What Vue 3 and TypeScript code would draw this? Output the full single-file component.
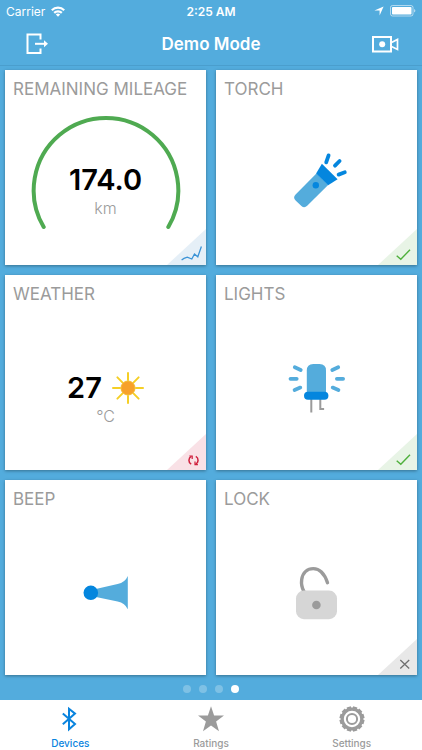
<script setup lang="ts">
import { ref } from 'vue'

type DeviceKind = 'mileage' | 'torch' | 'weather' | 'lights' | 'beep' | 'lock'
type Status = 'chart' | 'ok' | 'refresh' | 'off' | null

interface Device {
  kind: DeviceKind
  title: string
  status: Status
}

const devices: Device[] = [
  { kind: 'mileage', title: 'REMAINING MILEAGE', status: 'chart' },
  { kind: 'torch', title: 'TORCH', status: 'ok' },
  { kind: 'weather', title: 'WEATHER', status: 'refresh' },
  { kind: 'lights', title: 'LIGHTS', status: 'ok' },
  { kind: 'beep', title: 'BEEP', status: null },
  { kind: 'lock', title: 'LOCK', status: 'off' },
]

const pages = [1, 2, 3, 4]
const currentPage = ref(4)

const sunRays = [0, 45, 90, 135, 180, 225, 270, 315]
const gearTeeth = [0, 30, 60, 90, 120, 150, 180, 210, 240, 270, 300, 330]
</script>

<template>
  <div class="app">
    <header class="top">
      <div class="status-bar">
        <div class="carrier">
          <span>Carrier</span>
          <svg width="14" height="11" viewBox="0 0 14 11" fill="none" stroke="#fff" stroke-width="2.2">
            <path d="M0.8 4.2a8.8 8.8 0 0 1 12.4 0" />
            <path d="M3.2 6.9a5.4 5.4 0 0 1 7.6 0" />
            <path d="M7 10.8L4.8 8.6a3.1 3.1 0 0 1 4.4 0z" fill="#fff" stroke="none" />
          </svg>
        </div>
        <span class="clock">2:25 AM</span>
        <div class="indicators">
          <svg width="10" height="10" viewBox="0 0 10 10"><path d="M9.6 0.4L5.6 9.6V4.6H0.4z" fill="#fff" /></svg>
          <svg width="26" height="12" viewBox="0 0 26 12">
            <rect x="0.5" y="0.5" width="22.5" height="10.5" rx="2" fill="none" stroke="#fff" stroke-opacity="0.55" />
            <rect x="2" y="2" width="19.5" height="7.5" rx="0.8" fill="#fff" />
            <path d="M24 4v3.6q1.4-0.5 1.4-1.8T24 4z" fill="#fff" fill-opacity="0.55" />
          </svg>
        </div>
      </div>
      <div class="nav-bar">
        <button class="nav-button" type="button" aria-label="Log out">
          <svg width="22" height="22" viewBox="0 0 22 22" fill="none" stroke="#fff" stroke-width="2">
            <path d="M14.5 6.5V1.5H1.5v18.5h13v-4.5" />
            <path d="M9 10.8h10" />
            <path d="M18 7.3l4 3.5-4 3.5z" fill="#fff" stroke="none" />
          </svg>
        </button>
        <h1>Demo Mode</h1>
        <button class="nav-button" type="button" aria-label="Camera">
          <svg width="28" height="18" viewBox="0 0 28 18" fill="none" stroke="#fff" stroke-width="2">
            <path d="M2 2h18v14.5H2z" />
            <path d="M20.5 7.4l6-3v10l-6-3" stroke-width="1.7" />
            <circle cx="11.2" cy="9.2" r="3" fill="#fff" stroke="none" />
          </svg>
        </button>
      </div>
    </header>

    <main class="grid">
      <article v-for="d in devices" :key="d.kind" class="card">
        <h2>{{ d.title }}</h2>

        <div v-if="d.kind === 'mileage'" class="reading dial">
          <svg class="gauge" width="150" height="116" viewBox="0 0 150 116">
            <path d="M12.7 112A72.3 72.3 0 1 1 137.3 112" fill="none" stroke="#4faa51" stroke-width="4" stroke-linecap="round" />
          </svg>
          <div class="value">174.0</div>
          <div class="unit">km</div>
        </div>

        <div v-else-if="d.kind === 'weather'" class="reading">
          <div class="value">
            <span>27</span>
            <svg width="32" height="32" viewBox="0 0 32 32">
              <path
                v-for="a in sunRays" :key="a" d="M16 8V1" stroke="#f5cf25" stroke-width="2"
                stroke-linecap="round" :transform="`rotate(${a} 16 16)`"
              />
              <circle cx="16" cy="16" r="7" fill="#f7a12b" stroke="#f5b92a" />
            </svg>
          </div>
          <div class="unit">°C</div>
        </div>

        <button v-else class="toggle" type="button" :aria-label="d.title">
          <svg v-if="d.kind === 'torch'" width="64" height="64" viewBox="0 0 64 64">
            <path d="M31.4 22.4L10.6 43.4Q7.6 46.4 10.6 49.4L16.4 55Q19.4 57.6 22.2 54.8L43.1 33.9z" fill="#54acdc" />
            <path d="M36.9 12.7L52.6 28.3L43.1 34.2L31.1 22.4z" fill="#0486de" />
            <circle cx="30.8" cy="34.2" r="3.2" fill="#0486de" />
            <path d="M41.2 11.4L43.6 4.4M50 14.7L54.6 10M53.6 23.6L59.8 21.3" stroke="#0486de" stroke-width="3.8" stroke-linecap="round" />
          </svg>
          <svg v-else-if="d.kind === 'lights'" width="64" height="64" viewBox="0 0 64 64">
            <g transform="translate(-0.5 -0.4)">
              <path d="M26.8 43V57M35.8 43V53.3H39.6" fill="none" stroke="#9b9b9b" stroke-width="2" />
              <path d="M22.3 38V15Q22.3 8.5 28.8 8.5H35Q41.5 8.5 41.5 15V38z" fill="#54acdc" />
              <rect x="19.5" y="36.2" width="24.4" height="8" rx="4" fill="#0486de" />
              <path
                d="M10.3 11.6L16.2 14.3M6 23.2H12.2M10.1 34.4L15.8 32M53.7 11.6L47.8 14.3M58.6 23.2H52.4M53.9 34.4L48.2 32"
                stroke="#54acdc" stroke-width="3.8" stroke-linecap="round"
              />
            </g>
          </svg>
          <svg v-else-if="d.kind === 'beep'" width="64" height="64" viewBox="0 0 64 64">
            <path d="M19.6 28.4L43.6 23.1Q51.1 21.5 53.8 15V48.3Q51.1 42.1 43.6 40.5L19.6 35.5z" fill="#54acdc" />
            <circle cx="16.8" cy="31.8" r="7.3" fill="#0486de" />
          </svg>
          <svg v-else width="64" height="64" viewBox="0 0 64 64">
            <g transform="translate(-0.5 -0.6)">
              <path d="M19.4 31C17.4 27.5 16.6 23.5 17.2 19.2C18.2 12 23 8.2 28.8 8.2C36 8.2 40.4 14.5 43 22.3" fill="none" stroke="#9b9b9b" stroke-width="3.4" stroke-linecap="round" />
              <rect x="11.5" y="30.2" width="41" height="28.6" rx="8" fill="#d6d6d6" />
              <circle cx="31.9" cy="44.6" r="4.3" fill="#9b9b9b" />
            </g>
          </svg>
        </button>

        <svg v-if="d.status" class="corner" :class="d.status" width="39" height="36" viewBox="0 0 39 36" fill="none">
          <path class="fold" d="M0 36L39 0V36z" />
          <path v-if="d.status === 'chart'" d="M14.6 31L17 29.4L20.3 28.2L24.8 30L27.5 25L30.8 27.8L34.4 17.5" stroke="#3b93d6" stroke-width="1.3" />
          <path v-else-if="d.status === 'ok'" d="M18.7 26.7L22.8 30.3L32 20.7" stroke="#4fb03c" stroke-width="1.4" />
          <g v-else-if="d.status === 'refresh'" stroke="#cf1f3c" stroke-width="1.5">
            <path d="M24.2 30.2A4.4 4.4 0 0 1 24.4 22.4M28.8 22.4A4.4 4.4 0 0 1 28.6 30.2" />
            <path d="M22.3 22H25.2V25M30.9 30.6H28V27.6" stroke-width="1.2" />
          </g>
          <path v-else d="M22.3 21L31.2 29.5M31.2 21L22.3 29.5" stroke="#6f6f6f" stroke-width="1.3" />
        </svg>
      </article>
    </main>

    <div class="pager">
      <button
        v-for="p in pages" :key="p" type="button" class="dot" :class="{ active: p === currentPage }"
        :aria-label="`Page ${p}`" @click="currentPage = p"
      ></button>
    </div>

    <nav class="tabs">
      <a href="#devices" class="tab active">
        <svg width="28" height="26" viewBox="0 0 28 26" fill="none" stroke="#0a84de" stroke-width="2">
          <path d="M6.8 7.6L19 18L13 23.2V2.8L19 7.6L6.8 18.2" />
        </svg>
        <span>Devices</span>
      </a>
      <a href="#ratings" class="tab">
        <svg width="28" height="26" viewBox="0 0 28 26" fill="#9b9b9b">
          <path d="M14 0.3L17.1 9.4L27 9.5L19.1 15.4L22 25.2L14 19.4L6 25.2L8.9 15.4L1 9.5L10.9 9.4z" />
        </svg>
        <span>Ratings</span>
      </a>
      <a href="#settings" class="tab">
        <svg width="28" height="26" viewBox="0 0 28 26" fill="none" stroke="#9b9b9b">
          <path v-for="a in gearTeeth" :key="a" d="M14 3V0.5" stroke-width="4.4" :transform="`rotate(${a + 15} 14 13)`" />
          <circle cx="14" cy="13" r="9.8" stroke-width="3.2" />
          <circle cx="14" cy="13" r="5.1" stroke-width="2" />
        </svg>
        <span>Settings</span>
      </a>
    </nav>
  </div>
</template>

<style>
body {
  margin: 0;
  background: #53acdd;
}
</style>

<style scoped>
.app {
  display: flex;
  flex-direction: column;
  min-height: 100vh;
  background: #53acdd;
  font-family: Inter, "Liberation Sans", sans-serif;
}

button {
  padding: 0;
  border: 0;
  background: none;
  cursor: pointer;
}

svg {
  display: block;
  flex: none;
}

.top {
  color: #fff;
  border-bottom: 1px solid #4a9ecd;
}

.status-bar {
  display: grid;
  grid-template-columns: 1fr auto 1fr;
  align-items: center;
  height: 22px;
  padding: 0 6px;
  font-size: 12px;
}

.carrier,
.indicators {
  display: flex;
  align-items: center;
  gap: 6px;
}

.indicators {
  justify-content: flex-end;
}

.clock {
  font-weight: 600;
}

.nav-bar {
  display: flex;
  align-items: center;
  justify-content: space-between;
  height: 43px;
  padding: 0 20px;
}

.nav-button {
  display: grid;
  place-items: center;
  width: 34px;
  height: 34px;
}

h1 {
  margin: 0;
  font-size: 17px;
  font-weight: 600;
}

.grid {
  flex: 1;
  display: grid;
  grid-template-columns: 1fr 1fr;
  grid-auto-rows: 1fr;
  gap: 10px;
  padding: 4px 5px 0;
}

.card {
  position: relative;
  display: flex;
  flex-direction: column;
  min-height: 180px;
  background: #fff;
  box-shadow: 0 1px 3px rgba(0, 0, 0, 0.35);
}

h2 {
  height: 21px;
  margin: 0;
  padding: 9px 8px 0;
  color: #9b9b9b;
  font-size: 17px;
  font-weight: 400;
  line-height: 21px;
  white-space: nowrap;
}

.reading {
  flex: 1;
  display: grid;
  grid-template-rows: 1fr 32px 1fr;
  justify-items: center;
}

.dial {
  padding-bottom: 5px;
}

.gauge {
  grid-area: 1 / 1 / -1 / 1;
  margin-top: 15px;
}

.value {
  grid-area: 2 / 1;
  display: flex;
  align-items: center;
  gap: 10px;
  color: #000;
  font-size: 29px;
  font-weight: 600;
  line-height: 32px;
}

.unit {
  grid-area: 3 / 1;
  color: #9b9b9b;
  font-size: 16px;
  font-weight: 300;
  line-height: 24px;
}

.toggle {
  flex: 1;
  display: grid;
  place-items: center;
}

.corner {
  position: absolute;
  right: 0;
  bottom: 0;
}

.chart .fold {
  fill: #e5eff7;
}

.ok .fold {
  fill: #e8f4e6;
}

.refresh .fold {
  fill: #f9e1e6;
}

.off .fold {
  fill: #e8e8e8;
}

.pager {
  display: flex;
  align-items: center;
  justify-content: center;
  gap: 8px;
  height: 22px;
  padding-top: 3px;
}

.dot {
  width: 8px;
  height: 8px;
  border-radius: 50%;
  background: rgba(255, 255, 255, 0.25);
}

.dot.active {
  background: #fff;
}

.tabs {
  display: grid;
  grid-template-columns: repeat(3, 1fr);
  height: 50px;
  background: #fff;
}

.tab {
  display: flex;
  flex-direction: column;
  align-items: center;
  gap: 4px;
  padding-top: 6px;
  color: #9b9b9b;
  font-size: 10px;
  font-weight: 500;
  line-height: 14px;
  text-decoration: none;
}

.tab.active {
  color: #0a84de;
}
</style>
